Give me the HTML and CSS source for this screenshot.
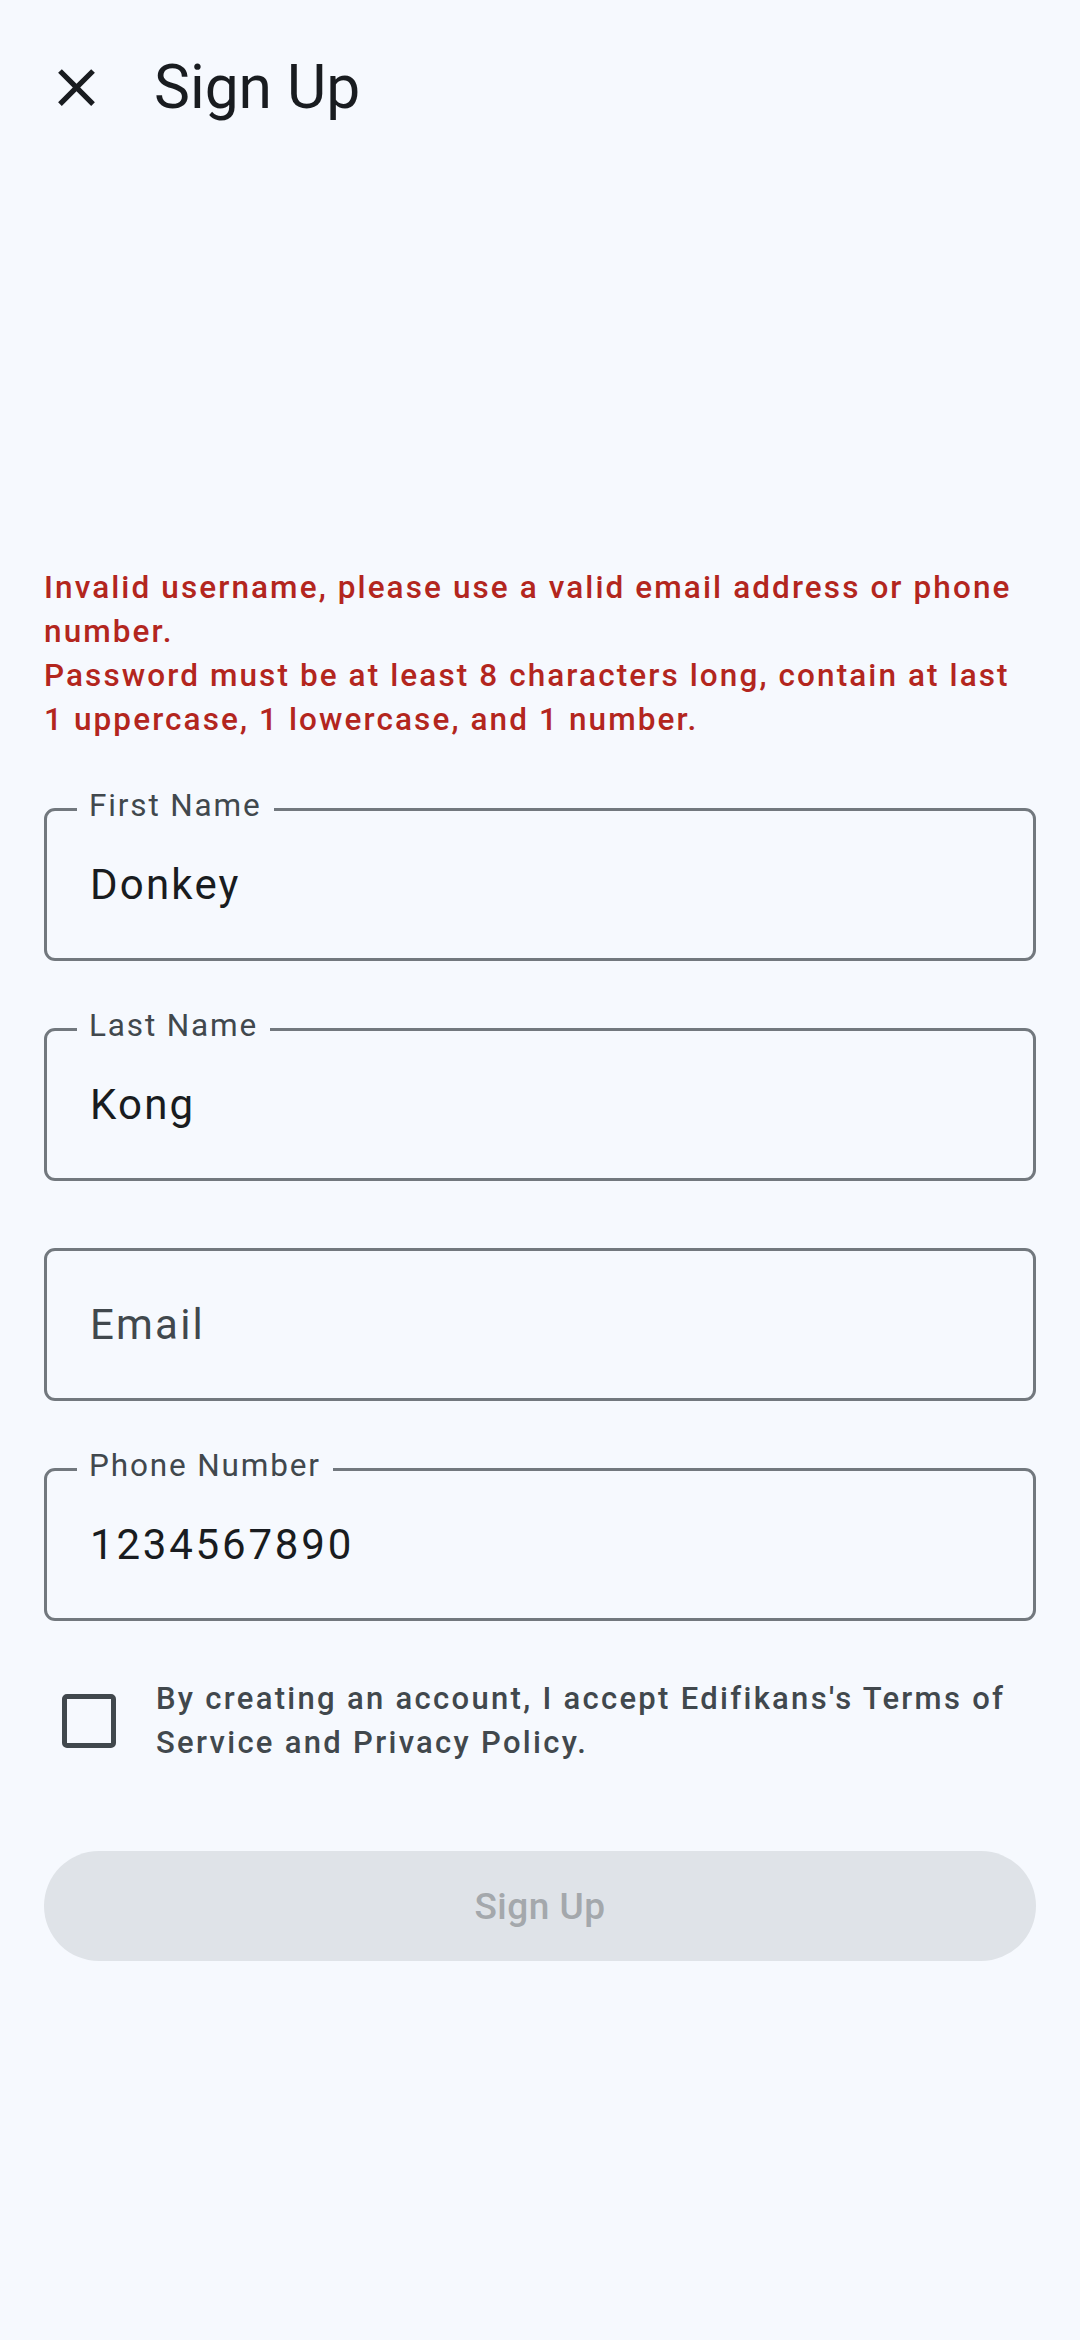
FILE: index.html
```html
<!DOCTYPE html>
<html lang="en">
<head>
<meta charset="utf-8">
<title>Sign Up</title>
<link rel="stylesheet" href="styles.css">
</head>
<body>
<div class="screen">
  <header class="appbar">
    <button class="icon-btn" aria-label="Close">
      <svg viewBox="0 0 24 24" width="63" height="63"><path d="M19 6.41 17.59 5 12 10.59 6.41 5 5 6.41 10.59 12 5 17.59 6.41 19 12 13.41 17.59 19 19 17.59 13.41 12z" fill="#191c20"/></svg>
    </button>
    <h1 class="title">Sign Up</h1>
  </header>

  <div class="errors">
    <p>Invalid username, please use a valid email address or phone number.</p>
    <p>Password must be at least 8 characters long, contain at last 1 uppercase, 1 lowercase, and 1 number.</p>
  </div>

  <form class="form">
    <div class="field">
      <span class="field-label">First Name</span>
      <span class="field-value">Donkey</span>
    </div>
    <div class="field">
      <span class="field-label">Last Name</span>
      <span class="field-value">Kong</span>
    </div>
    <div class="field">
      <span class="field-placeholder">Email</span>
    </div>
    <div class="field">
      <span class="field-label">Phone Number</span>
      <span class="field-value field-value--digits">1234567890</span>
    </div>

    <label class="terms">
      <span class="checkbox"></span>
      <span class="terms-text">By creating an account, I accept Edifikans's Terms of Service and Privacy Policy.</span>
    </label>

    <div class="submit">Sign Up</div>
  </form>
</div>
</body>
</html>
```

FILE: styles.css
```css
html, body {
  margin: 0;
  padding: 0;
  background: #f6f9fe;
}
body {
  font-family: Roboto, "Noto Sans", "Liberation Sans", sans-serif;
  width: 1080px;
  min-height: 2340px;
}
.screen {
  display: flex;
  flex-direction: column;
}
.appbar {
  height: 175px;
  display: flex;
  align-items: center;
}
.icon-btn {
  width: 63px;
  height: 63px;
  margin-left: 45px;
  padding: 0;
  border: 0;
  background: none;
  display: flex;
}
.title {
  margin: 0 0 0 46px;
  font-size: 60.5px;
  font-weight: 400;
  color: #191c20;
  line-height: 71px;
}
.errors {
  margin: 391px 52px 0 44px;
  color: #b3261e;
  font-size: 31.5px;
  font-weight: 500;
  line-height: 44px;
  letter-spacing: 2.1px;
}
.errors p {
  margin: 0;
}
.form {
  margin: 66px 44px 0 44px;
  display: flex;
  flex-direction: column;
}
.field {
  position: relative;
  box-sizing: border-box;
  height: 153px;
  border: 3px solid #72787e;
  border-radius: 11px;
  padding: 0 0 0 43px;
  display: flex;
  align-items: center;
  margin-bottom: 67px;
}
.field-label {
  position: absolute;
  top: -21px;
  left: 30px;
  padding: 0 12px;
  background: #f6f9fe;
  font-size: 31.5px;
  line-height: 32px;
  letter-spacing: 1.85px;
  color: #41484d;
}
.field-value,
.field-placeholder {
  font-size: 42px;
  line-height: 49px;
  letter-spacing: 2.2px;
  color: #191c20;
}
.field-value--digits {
  letter-spacing: 2.8px;
}
.field-placeholder {
  color: #41484d;
}
.terms {
  margin-top: -11px;
  display: flex;
  align-items: center;
}
.checkbox {
  flex: none;
  box-sizing: border-box;
  width: 54px;
  height: 54px;
  margin-left: 18px;
  border: 5px solid #41484d;
  border-radius: 5px;
}
.terms-text {
  margin-left: 40px;
  font-size: 31px;
  font-weight: 500;
  line-height: 44px;
  letter-spacing: 2.3px;
  color: #41484d;
}
.submit {
  margin-top: 86px;
  height: 110px;
  border-radius: 55px;
  background: #dfe3e8;
  color: #a4a8ac;
  font-size: 37px;
  font-weight: 500;
  letter-spacing: 0.5px;
  display: flex;
  align-items: center;
  justify-content: center;
}
```
